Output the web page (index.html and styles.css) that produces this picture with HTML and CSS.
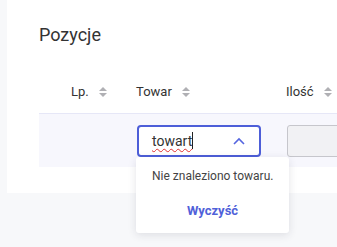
FILE: index.html
```html
<!DOCTYPE html>
<html lang="pl">
<head>
    <meta charset="UTF-8">
    <meta name="viewport" content="width=device-width, initial-scale=1.0">
    <title>Pozycje</title>
    <link rel="stylesheet" href="styles.css">
</head>
<body>
    <div class="card">
        <h2 class="card-title">Pozycje</h2>

        <div class="table">
            <div class="row head">
                <div class="cell col-lp">Lp. <span class="sort"></span></div>
                <div class="cell col-towar">Towar <span class="sort"></span></div>
                <div class="cell col-ilosc">Ilość <span class="sort"></span></div>
            </div>
            <div class="row body-row">
                <div class="cell col-lp"></div>
                <div class="cell col-towar">
                    <div class="select">
                        <span class="select-text"><span class="typo">towart</span><span class="caret"></span></span>
                        <svg class="chevron" width="12" height="8" viewBox="0 0 12 8">
                            <path d="M1 7 L6 2 L11 7" fill="none" stroke="#5566e0" stroke-width="1.6"/>
                        </svg>
                    </div>
                    <div class="dropdown">
                        <div class="empty">Nie znaleziono towaru.</div>
                        <button class="clear">Wyczyść</button>
                    </div>
                </div>
                <div class="cell col-ilosc">
                    <div class="qty"></div>
                </div>
            </div>
        </div>
    </div>
</body>
</html>
```

FILE: styles.css
```css
html,
body {
    height: 100%;
}
body {
    font-family: Roboto, "Liberation Sans", Arial, sans-serif;
    margin: 0;
    padding: 0 0 0 7px;
    box-sizing: border-box;
    background-color: #f7f8fa;
    color: #333;
}
.card {
    background-color: #fff;
    height: 193px;
    box-sizing: border-box;
    padding: 24px 0 0 32px;
}
.card-title {
    margin: 0;
    font-size: 18px;
    font-weight: 400;
    line-height: 21px;
    color: #333;
}
.table {
    margin-top: 25px;
}
.row {
    display: flex;
}
.row.head {
    height: 43px;
    align-items: center;
    border-bottom: 1px solid #e6e7f7;
    font-size: 13px;
    font-weight: 400;
    color: #333;
}
.body-row {
    height: 53px;
    align-items: center;
    background-color: #f7f7fd;
}
.cell {
    display: flex;
    align-items: center;
    box-sizing: border-box;
}
.col-lp {
    width: 81px;
    padding-left: 32px;
}
.col-towar {
    width: 150px;
    padding-left: 16px;
    position: relative;
    z-index: 2;
}
.col-ilosc {
    flex: 1;
    min-width: 0;
    padding-left: 16px;
    overflow: hidden;
}
.sort {
    display: inline-block;
    width: 8px;
    height: 10px;
    margin-left: 10px;
    position: relative;
}
.sort::before,
.sort::after {
    content: "";
    position: absolute;
    left: 0;
    border-left: 4px solid transparent;
    border-right: 4px solid transparent;
}
.sort::before {
    top: 0;
    border-bottom: 4px solid #b0b0b4;
}
.sort::after {
    bottom: 0;
    border-top: 4px solid #b0b0b4;
}
.select {
    margin-left: 1px;
    width: 124px;
    height: 32px;
    box-sizing: border-box;
    border: 2px solid #4d5ed8;
    border-radius: 4px;
    background-color: #fff;
    display: flex;
    align-items: center;
    justify-content: space-between;
    padding: 0 14px 0 13px;
    font-size: 14px;
    color: #333;
}
.select-text {
    display: flex;
    align-items: center;
}
.typo {
    text-decoration: underline wavy #e03030;
    text-decoration-thickness: 1px;
    text-underline-offset: 2px;
}
.caret {
    display: inline-block;
    width: 1px;
    height: 17px;
    background-color: #222;
}
.chevron {
    display: block;
}
.qty {
    margin-left: 1px;
    width: 80px;
    flex-shrink: 0;
    height: 32px;
    box-sizing: border-box;
    border: 1px solid #c6c6cc;
    border-radius: 3px;
    background-color: #f1f1f4;
}
.dropdown {
    position: absolute;
    top: 100%;
    left: 16px;
    width: 153px;
    height: 76px;
    box-sizing: border-box;
    background-color: #fff;
    border-radius: 3px;
    box-shadow: 0 2px 8px rgba(30, 30, 60, 0.12);
    display: flex;
    flex-direction: column;
}
.empty {
    font-size: 12px;
    color: #444;
    padding: 12px 0 0 16px;
    line-height: 14px;
}
.clear {
    margin-top: 20px;
    background: none;
    border: none;
    font-family: inherit;
    font-size: 13px;
    font-weight: 700;
    color: #5061d9;
    padding: 0;
    line-height: 16px;
    cursor: pointer;
}
```
